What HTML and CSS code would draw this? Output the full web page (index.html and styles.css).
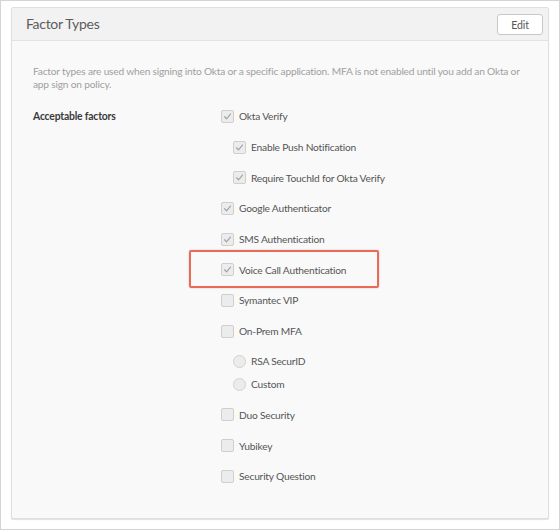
FILE: index.html
```html
<!DOCTYPE html>
<html>
<head>
<meta charset="utf-8">
<link rel="stylesheet" href="styles.css">
</head>
<body>
<div class="frame">
  <section class="panel">
    <header class="panel-head">
      <h2 class="panel-title">Factor Types</h2>
      <button class="btn">Edit</button>
    </header>
    <div class="panel-body">
      <p class="desc">Factor types are used when signing into Okta or a specific application. MFA is not enabled until you add an Okta or app sign on policy.</p>
      <div class="form-grid">
        <div class="label">Acceptable factors</div>
        <div class="options">
          <div class="row"><span class="cb checked"><svg viewBox="0 0 13 13"><polyline points="3,6.8 5.4,9.2 10,3.6"/></svg></span>Okta Verify</div>
          <div class="row sub"><span class="cb checked"><svg viewBox="0 0 13 13"><polyline points="3,6.8 5.4,9.2 10,3.6"/></svg></span>Enable Push Notification</div>
          <div class="row sub"><span class="cb checked"><svg viewBox="0 0 13 13"><polyline points="3,6.8 5.4,9.2 10,3.6"/></svg></span>Require TouchId for Okta Verify</div>
          <div class="row"><span class="cb checked"><svg viewBox="0 0 13 13"><polyline points="3,6.8 5.4,9.2 10,3.6"/></svg></span>Google Authenticator</div>
          <div class="row"><span class="cb checked"><svg viewBox="0 0 13 13"><polyline points="3,6.8 5.4,9.2 10,3.6"/></svg></span>SMS Authentication</div>
          <div class="row highlighted"><span class="cb checked"><svg viewBox="0 0 13 13"><polyline points="3,6.8 5.4,9.2 10,3.6"/></svg></span>Voice Call Authentication</div>
          <div class="row"><span class="cb"></span>Symantec VIP</div>
          <div class="row"><span class="cb"></span>On-Prem MFA</div>
          <div class="radios">
            <div class="radio-row"><span class="rb"></span>RSA SecurID</div>
            <div class="radio-row"><span class="rb"></span>Custom</div>
          </div>
          <div class="row"><span class="cb"></span>Duo Security</div>
          <div class="row"><span class="cb"></span>Yubikey</div>
          <div class="row"><span class="cb"></span>Security Question</div>
        </div>
      </div>
    </div>
  </section>
</div>
</body>
</html>
```

FILE: styles.css
```css
* { box-sizing: border-box; }
html, body { margin: 0; padding: 0; background: #fff; }
body { font-family: "Lato", "Open Sans", sans-serif; }

.frame {
  width: 560px;
  height: 530px;
  border: 1px solid #d4d4d4;
  padding: 6px 10px 0 10px;
}

.panel {
  width: 538px;
  height: 512px;
  border: 1px solid #e0e0e0;
  border-radius: 2px;
  background: #f9f9f9;
  box-shadow: 0 1px 1px rgba(0,0,0,0.12);
}

.panel-head {
  height: 33px;
  background: #f2f2f2;
  border-bottom: 1px solid #e2e2e2;
  display: flex;
  align-items: center;
  justify-content: space-between;
  padding: 0 5px 0 14px;
}

.panel-title {
  margin: 0 0 1px 0;
  font-size: 14px;
  letter-spacing: -0.3px;
  font-weight: 400;
  color: #5c5c5c;
}

.btn {
  width: 46px;
  height: 21px;
  font-family: inherit;
  font-size: 10.5px;
  letter-spacing: -0.1px;
  color: #555;
  background: #fff;
  border: 1px solid #c8c8c8;
  border-radius: 3px;
  padding: 0;
  margin-top: 1px;
}

.panel-body {
  padding: 24px 21px 0 21px;
}

.desc {
  margin: 0;
  font-size: 10.2px;
  letter-spacing: -0.2px;
  line-height: 13px;
  color: #a0a0a0;
}

.form-grid {
  display: grid;
  grid-template-columns: 188px 1fr;
  margin-top: 10px;
}

.label {
  font-size: 10.4px;
  letter-spacing: -0.2px;
  font-weight: 700;
  color: #3a3a3a;
  height: 30.7px;
  line-height: 30.7px;
}

.options { display: flex; flex-direction: column; }

.row {
  height: 30.7px;
  display: flex;
  align-items: center;
  font-size: 10.2px;
  letter-spacing: -0.2px;
  color: #555;
}
.row.sub { padding-left: 12px; }

.cb {
  width: 13px;
  height: 13px;
  border: 1px solid #cfcfcf;
  border-radius: 2px;
  background: #ececec;
  margin-right: 5px;
  flex: none;
  display: flex;
}
.cb svg { width: 11px; height: 11px; }
.cb polyline {
  fill: none;
  stroke: #a4a4a4;
  stroke-width: 1.4;
  stroke-linecap: round;
  stroke-linejoin: round;
}

.radios { padding: 3px 0 4px 12px; }
.radio-row {
  height: 23px;
  display: flex;
  align-items: center;
  font-size: 10.2px;
  letter-spacing: -0.2px;
  color: #555;
}
.rb {
  width: 13px;
  height: 13px;
  border: 1px solid #d2d2d2;
  border-radius: 50%;
  background: #ececec;
  margin-right: 5px;
  flex: none;
}

.highlighted { position: relative; }
.highlighted::after {
  content: "";
  position: absolute;
  left: -32px;
  top: -4px;
  width: 186px;
  height: 34px;
  border: 2px solid #ea6a55;
  border-radius: 2px;
  box-shadow: 0 0 2px rgba(0,0,0,0.22);
}
```
